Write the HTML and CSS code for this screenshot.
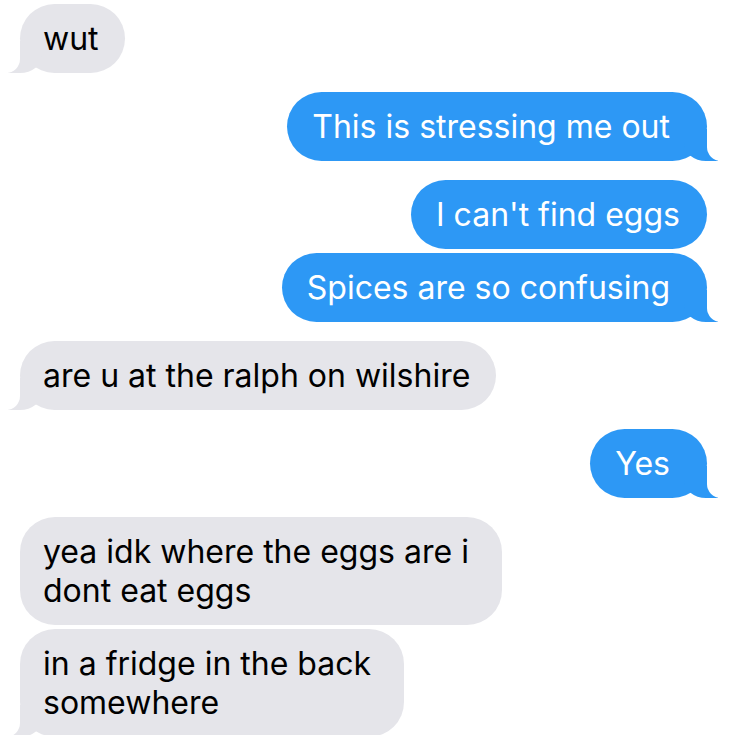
FILE: index.html
```html
<!DOCTYPE html>
<html lang="en">
<head>
<meta charset="utf-8">
<title>Messages</title>
<link rel="stylesheet" href="styles.css">
</head>
<body>
<main class="thread">
  <div class="group">
    <div class="msg them tail">wut</div>
  </div>
  <div class="group">
    <div class="msg me tail">This is stressing me out</div>
  </div>
  <div class="group">
    <div class="msg me">I can't find eggs</div>
    <div class="msg me tail">Spices are so confusing</div>
  </div>
  <div class="group">
    <div class="msg them tail">are u at the ralph on wilshire</div>
  </div>
  <div class="group">
    <div class="msg me tail">Yes</div>
  </div>
  <div class="group">
    <div class="msg them multi">yea idk where the eggs are i<br>dont eat eggs</div>
    <div class="msg them multi tail">in a fridge in the back<br>somewhere</div>
  </div>
</main>
</body>
</html>
```
FILE: styles.css
```css
html, body {
  margin: 0;
  padding: 0;
  background: #ffffff;
  overflow: hidden;
}

.thread {
  display: flex;
  flex-direction: column;
  gap: 19px;
  padding: 4px 28px 0 20px;
  font-family: Inter, "Open Sans", "Liberation Sans", sans-serif;
}

.group {
  display: flex;
  flex-direction: column;
  gap: 4px;
}

.msg {
  position: relative;
  width: fit-content;
  font-size: 32px;
  line-height: 39px;
  font-weight: 400;
  padding: 15px 26px 15px 23px;
  border-radius: 35px;
}

.them {
  align-self: flex-start;
  background: #e5e5ea;
  color: #000000;
}

.them.multi {
  padding-right: 33px;
}

.me {
  align-self: flex-end;
  background: #2d98f5;
  color: #ffffff;
  padding: 15px 27px 15px 25px;
}

.me.tail {
  padding-right: 37px;
}

.tail::before,
.tail::after {
  content: "";
  position: absolute;
  bottom: 0;
  height: 32px;
}

.me.tail::before {
  right: -11px;
  width: 34px;
  background: #2d98f5;
  border-bottom-left-radius: 22px 18px;
}

.me.tail::after {
  right: -44px;
  width: 44px;
  background: #ffffff;
  border-bottom-left-radius: 14px;
}

.them.tail::before {
  left: -12px;
  width: 34px;
  background: #e5e5ea;
  border-bottom-right-radius: 22px 18px;
}

.them.tail::after {
  left: -44px;
  width: 44px;
  background: #ffffff;
  border-bottom-right-radius: 14px;
}
```
